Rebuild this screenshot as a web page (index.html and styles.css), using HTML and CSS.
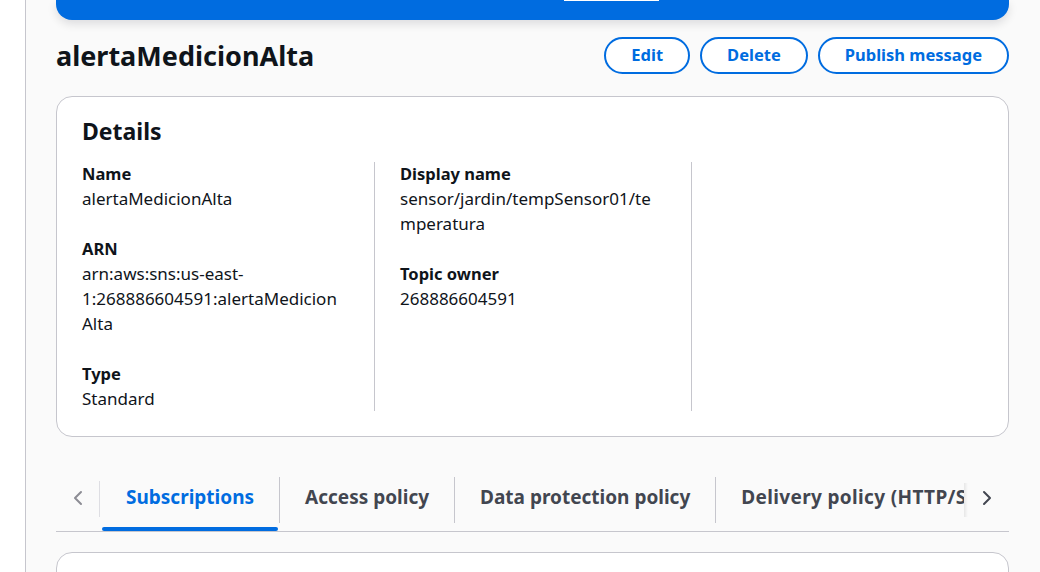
FILE: index.html
```html
<!DOCTYPE html>
<html lang="en">
<head>
<meta charset="utf-8">
<title>alertaMedicionAlta</title>
<link rel="stylesheet" href="styles.css">
</head>
<body>
<div class="page">
  <aside class="nav-strip"></aside>
  <main class="main">
    <div class="flashbar"><span class="flash-mark"></span></div>
    <header class="page-header">
      <h1 class="title">alertaMedicionAlta</h1>
      <div class="actions">
        <button class="btn">Edit</button>
        <button class="btn">Delete</button>
        <button class="btn">Publish message</button>
      </div>
    </header>
    <section class="card details">
      <h2 class="card-title">Details</h2>
      <div class="cols">
        <div class="col">
          <div class="kv"><div class="k">Name</div><div class="v">alertaMedicionAlta</div></div>
          <div class="kv"><div class="k">ARN</div><div class="v">arn:aws:sns:us-east-1:268886604591:alertaMedicionAlta</div></div>
          <div class="kv"><div class="k">Type</div><div class="v">Standard</div></div>
        </div>
        <div class="col">
          <div class="kv"><div class="k">Display name</div><div class="v">sensor/jardin/tempSensor01/temperatura</div></div>
          <div class="kv"><div class="k">Topic owner</div><div class="v">268886604591</div></div>
        </div>
        <div class="col"></div>
      </div>
    </section>
    <nav class="tabs">
      <div class="tab-arrow left">
        <svg width="16" height="16" viewBox="0 0 16 16"><path d="M11 2 5 8l6 6" fill="none" stroke="currentColor" stroke-width="2" stroke-linejoin="round" stroke-linecap="round"/></svg>
      </div>
      <div class="tab-scroll">
        <div class="tab-list">
          <div class="tab active">Subscriptions</div>
          <div class="tab">Access policy</div>
          <div class="tab">Data protection policy</div>
          <div class="tab">Delivery policy (HTTP/S)</div>
        </div>
      </div>
      <div class="tab-arrow right">
        <svg width="16" height="16" viewBox="0 0 16 16"><path d="M5 2l6 6-6 6" fill="none" stroke="currentColor" stroke-width="2" stroke-linejoin="round" stroke-linecap="round"/></svg>
      </div>
    </nav>
    <section class="card next"></section>
  </main>
</div>
</body>
</html>
```
FILE: styles.css
```css
* { box-sizing: border-box; }
html, body { margin: 0; padding: 0; }
body {
  font-family: "Noto Sans", "Open Sans", Arial, sans-serif;
  color: #0f141a;
  background: #fafafa;
  height: 572px;
  overflow: hidden;
}
.page { display: flex; min-height: 572px; }
.nav-strip {
  width: 26px;
  flex: none;
  background: #ffffff;
  border-right: 1px solid #c6c6cd;
}
.main {
  flex: 1;
  padding: 0 31px 0 30px;
  min-width: 0;
}
.flashbar {
  height: 20px;
  background: #006ce0;
  border-radius: 0 0 16px 16px;
  box-shadow: 0 4px 10px rgba(0, 7, 22, 0.12);
  padding-left: 508px;
}
.flash-mark {
  display: block;
  width: 95px;
  height: 1px;
  background: #ffffff;
}
.page-header {
  display: flex;
  justify-content: space-between;
  align-items: center;
  margin-top: 17px;
  height: 37px;
}
.title {
  margin: 0;
  font-size: 27px;
  font-weight: 700;
  line-height: 36px;
}
.actions { display: flex; gap: 10px; }
.btn {
  font-family: inherit;
  font-size: 16.5px;
  font-weight: 700;
  line-height: 21px;
  color: #006ce0;
  background: #ffffff;
  border: 2px solid #006ce0;
  border-radius: 20px;
  padding: 5px 25px 7px;
  height: 37px;
}
.card {
  background: #ffffff;
  border: 1px solid #c6c6cd;
  border-radius: 16px;
}
.details {
  margin-top: 22px;
  padding: 19px 25px 25px;
}
.card-title {
  margin: 0;
  font-size: 23px;
  font-weight: 700;
  line-height: 30px;
}
.cols {
  display: grid;
  grid-template-columns: 292px 317px 1fr;
  margin-top: 16px;
}
.col {
  display: flex;
  flex-direction: column;
  gap: 26px;
  padding-right: 30px;
}
.col + .col {
  border-left: 1px solid #c6c6cd;
  padding-left: 25px;
}
.k {
  font-size: 16.5px;
  font-weight: 700;
  line-height: 24px;
}
.v {
  font-size: 17px;
  line-height: 25px;
  overflow-wrap: anywhere;
}
.tabs {
  display: flex;
  margin-top: 37px;
  border-bottom: 1px solid #c6c6cd;
  height: 58px;
}
.tab-arrow {
  flex: none;
  width: 44px;
  display: flex;
  align-items: center;
  justify-content: center;
  margin: 7px 0 14px;
  padding-bottom: 2px;
}
.tab-arrow.left { color: #8c8c94; border-right: 1px solid #dedee3; }
.tab-arrow.right { color: #424650; position: relative; width: 45px; }
.tab-arrow.right::before {
  content: "";
  position: absolute;
  left: 0;
  top: 2px;
  bottom: 0;
  width: 4px;
  background: linear-gradient(to right, rgba(0,0,0,0.08), rgba(0,0,0,0));
}
.tab-scroll {
  flex: 1;
  overflow: hidden;
  min-width: 0;
}
.tab-list {
  display: flex;
  height: 100%;
}
.tab {
  flex: none;
  position: relative;
  font-size: 19px;
  font-weight: 700;
  color: #424650;
  line-height: 24px;
  padding: 11px 25px 0 26px;
  white-space: nowrap;
}
.tab + .tab::before {
  content: "";
  position: absolute;
  left: 0;
  top: 3px;
  height: 46px;
  border-left: 1px solid #c6c6cd;
}
.tab:last-child { letter-spacing: 0.35px; }
.tab.active { color: #006ce0; }
.tab.active::after {
  content: "";
  position: absolute;
  left: 2px;
  right: 1px;
  bottom: 0;
  height: 4px;
  border-radius: 2px;
  background: #006ce0;
}
.next {
  margin-top: 20px;
  height: 60px;
}
```
